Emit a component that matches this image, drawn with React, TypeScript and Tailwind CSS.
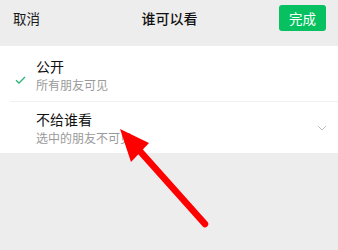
import React from 'react';

const font = { fontFamily: '"Noto Sans CJK SC", "Noto Sans", sans-serif' };

const Row: React.FC<{ title: string; sub: string; checked?: boolean; chevron?: boolean; pad: string }> = ({ title, sub, checked, chevron, pad }) => (
  <div className={`flex items-center ${pad}`}>
    <div className="w-[36px] flex justify-center pl-[5px] pt-[10px]">
      {checked && (
        <svg width="11" height="8" viewBox="0 0 11 8" fill="none">
          <path d="M1 4.2 L4 7 L10 1" stroke="#2bb37a" strokeWidth="1.3" />
        </svg>
      )}
    </div>
    <div className="flex-1 flex flex-col">
      <span className="text-[14px] leading-[20px] text-[#111]">{title}</span>
      <span className="text-[12px] leading-[18px] text-[#9a9a9a]">{sub}</span>
    </div>
    {chevron && (
      <svg width="10" height="6" viewBox="0 0 10 6" fill="none" className="mr-[11px]">
        <path d="M1 1 L5 5 L9 1" stroke="#b5b5b5" strokeWidth="0.9" />
      </svg>
    )}
  </div>
);

export default function App() {
  return (
    <div className="relative w-[338px] h-[250px] bg-[#ededed] overflow-hidden" style={font}>
      <div className="flex items-center justify-between h-[46px] pl-[13px] pr-[12px] pb-[10px]">
        <span className="text-[13.5px] text-[#181818] w-[60px]">取消</span>
        <span className="text-[14px] font-medium text-[#111]">谁可以看</span>
        <div className="w-[60px] flex justify-end">
          <button className="w-[47px] h-[26px] rounded-[3px] bg-[#07c160] text-white text-[13.5px]">完成</button>
        </div>
      </div>
      <div className="bg-white">
        <Row title="公开" sub="所有朋友可见" checked pad="pt-[10px] pb-[7px]" />
        <div className="ml-[10px] h-px bg-[#f0f0f0]" />
        <Row title="不给谁看" sub="选中的朋友不可见" chevron pad="pt-[7px] pb-[6px]" />
      </div>
      <svg className="absolute left-0 top-0" width="338" height="250" viewBox="0 0 338 250">
        <line x1="205" y1="224" x2="138" y2="149" stroke="#ff0000" strokeWidth="6.5" strokeLinecap="round" />
        <polygon points="120,129 149,143 131,162" fill="#ff0000" />
      </svg>
    </div>
  );
}
